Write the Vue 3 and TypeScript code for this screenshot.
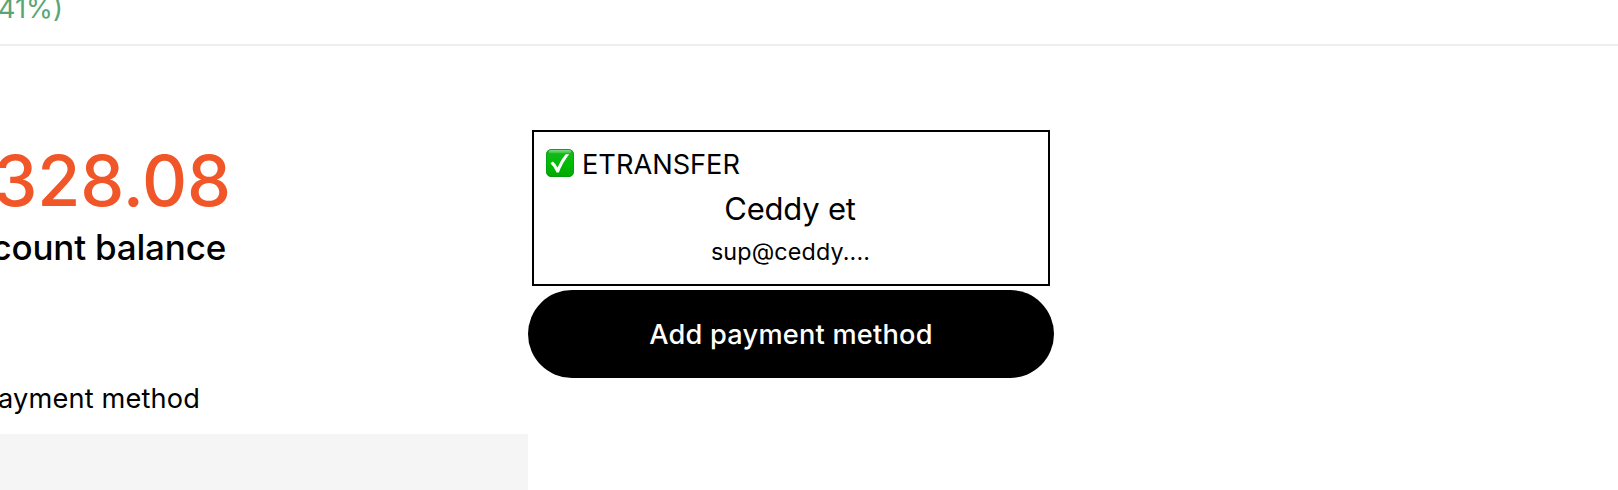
<script setup lang="ts">
interface PaymentMethod {
  type: string
  name: string
  account: string
}

const method: PaymentMethod = {
  type: 'ETRANSFER',
  name: 'Ceddy et',
  account: 'sup@ceddy....',
}
</script>

<template>
  <main class="page">
    <header class="topbar">
      <span class="change">41%)</span>
    </header>
    <div class="content">
      <section class="balance">
        <div class="amount">328.08</div>
        <div class="caption">count balance</div>
        <div class="label">ayment method</div>
        <div class="panel"></div>
      </section>
      <section class="methods">
        <article class="card">
          <div class="card-head">
            <svg class="check" viewBox="0 0 28 28" aria-hidden="true">
              <defs>
                <linearGradient id="check-fill" x1="0" y1="0" x2="0" y2="1">
                  <stop offset="0" stop-color="#22a52b" />
                  <stop offset="0.2" stop-color="#12b817" />
                  <stop offset="0.5" stop-color="#00bd05" />
                  <stop offset="1" stop-color="#00a800" />
                </linearGradient>
                <linearGradient id="check-shine" x1="0" y1="0" x2="0" y2="1">
                  <stop offset="0" stop-color="#7ddc82" />
                  <stop offset="1" stop-color="#35c33b" />
                </linearGradient>
              </defs>
              <rect width="28" height="28" rx="5.5" fill="url(#check-fill)" />
              <rect x="2.5" y="1" width="23" height="3.2" rx="1.6" fill="url(#check-shine)" />
              <rect x="0.5" y="0.5" width="27" height="27" rx="5" fill="none" stroke="#0a971a" stroke-opacity="0.65" />
              <path d="M4.5 14.3 6.9 12.6Q9.8 15.1 11.5 18.4Q15 10.5 19.6 5.3H23.2Q16.6 13.5 12.9 23.4H10.6Q8.4 18.2 4.5 14.3Z" fill="#fff" />
            </svg>
            <span class="kind">{{ method.type }}</span>
          </div>
          <div class="name">{{ method.name }}</div>
          <div class="account">{{ method.account }}</div>
        </article>
        <button class="add" type="button"><span>Add payment method</span></button>
      </section>
    </div>
  </main>
</template>

<style>
body {
  margin: 0;
  background: #fff;
}
</style>

<style scoped>
.page {
  width: 1618px;
  height: 490px;
  overflow: hidden;
  background: #fff;
  color: #000;
  font-family: Inter, 'Liberation Sans', sans-serif;
  white-space: nowrap;
}
.topbar {
  box-sizing: border-box;
  height: 46px;
  border-bottom: 2px solid #eee;
  overflow: hidden;
}
.change {
  display: flex;
  justify-content: flex-end;
  width: 63px;
  margin-top: -9px;
  font-size: 27.4px;
  line-height: 35px;
  color: #5aa575;
}
.content {
  display: flex;
  height: 444px;
}
.balance {
  display: flex;
  flex-direction: column;
  width: 528px;
}
.amount,
.caption,
.label {
  display: flex;
  justify-content: flex-end;
}
.amount {
  width: 231px;
  height: 88px;
  margin-top: 91px;
  font-size: 70px;
  font-weight: 500;
  line-height: 88px;
  letter-spacing: -0.1px;
  color: #f05627;
}
.caption {
  width: 226px;
  font-size: 35px;
  font-weight: 500;
  line-height: 44px;
  letter-spacing: -0.2px;
}
.label {
  width: 200px;
  margin-top: 112px;
  font-size: 27.2px;
  line-height: 35px;
  letter-spacing: 0.15px;
}
.panel {
  flex: 1;
  margin-top: 18px;
  background: #f5f5f5;
}
.methods {
  width: 526px;
  padding-top: 84px;
}
.card {
  box-sizing: border-box;
  height: 156px;
  margin: 0 4px 4px;
  padding: 15px 12px 0;
  border: 2px solid #000;
  text-align: center;
}
.card-head {
  display: flex;
  align-items: flex-start;
  height: 35px;
}
.check {
  width: 28px;
  height: 28px;
  margin-top: 2px;
}
.kind {
  margin-left: 8px;
  font-size: 27.2px;
  line-height: 35px;
}
.name {
  margin-top: 6px;
  padding-right: 2px;
  font-size: 31px;
  line-height: 41px;
  letter-spacing: -0.2px;
}
.account {
  margin-top: 7px;
  padding-right: 1px;
  font-size: 23.3px;
  line-height: 31px;
  letter-spacing: 0.15px;
}
.add {
  box-sizing: border-box;
  display: flex;
  align-items: center;
  justify-content: center;
  width: 526px;
  height: 88px;
  padding: 1px 0 0;
  border: 0;
  border-radius: 44px;
  background: #000;
  color: #fff;
  font: 500 27.2px/35px Inter, 'Liberation Sans', sans-serif;
  letter-spacing: 0.22px;
}
</style>
